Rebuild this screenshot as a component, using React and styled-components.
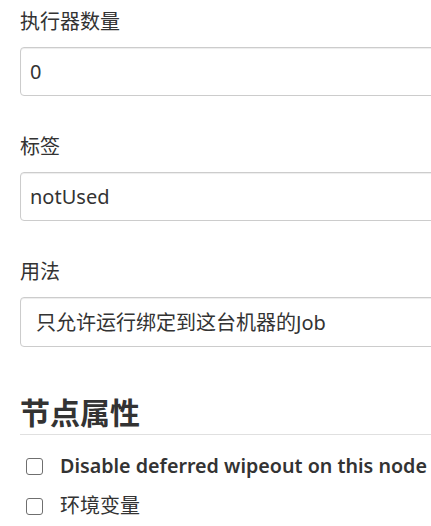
import styled, { createGlobalStyle } from 'styled-components';

const GlobalStyle = createGlobalStyle`
  html, body {
    margin: 0;
    padding: 0;
    background: #fff;
    overflow: hidden;
  }
  body {
    font-family: "Noto Sans", "Noto Sans CJK SC", sans-serif;
    color: #333;
  }
`;

const Page = styled.div`
  width: 480px;
  padding: 7px 0 0 20px;
`;

const FormGroup = styled.div`
  margin-bottom: 36px;
`;

const Label = styled.label`
  display: block;
  font-size: 20px;
  line-height: 30px;
  margin-bottom: 10px;
`;

const Input = styled.input`
  display: block;
  box-sizing: border-box;
  width: 100%;
  height: 49px;
  padding: 0 9px;
  font-family: inherit;
  font-size: 20px;
  color: #333;
  background: #fff;
  border: 1px solid #ccc;
  border-radius: 4px;
  box-shadow: inset 0 1px 1px rgba(0, 0, 0, 0.075);
  outline: none;
`;

const Select = styled.select`
  display: block;
  box-sizing: border-box;
  width: 100%;
  height: 50px;
  padding: 0 15px;
  font-family: inherit;
  font-size: 20px;
  color: #333;
  background: #fff;
  border: 1px solid #ccc;
  border-radius: 4px;
  box-shadow: inset 0 1px 1px rgba(0, 0, 0, 0.075);
  appearance: none;
  outline: none;
`;

const Heading = styled.h2`
  margin: 48px 0 0;
  padding-bottom: 3px;
  font-size: 30px;
  line-height: 36px;
  font-weight: 700;
  color: #333;
  border-bottom: 1px solid #e0e0e0;
`;

const CheckList = styled.div`
  display: flex;
  flex-direction: column;
  gap: 10px;
  padding-top: 16px;
`;

const CheckRow = styled.label`
  display: flex;
  align-items: center;
  font-size: ${(p) => (p.$strong ? '19.7px' : '20px')};
  line-height: 30px;
  font-weight: ${(p) => (p.$strong ? 600 : 400)};
  color: #333;
  white-space: nowrap;
`;

const Box = styled.input`
  appearance: none;
  box-sizing: border-box;
  width: 17px;
  height: 17px;
  margin: 0 17px 0 6px;
  border: 1.5px solid #6f6f6f;
  border-radius: 3px;
  background: #fff;
  flex-shrink: 0;
`;

const App = () => {
  return (
    <Page>
      <GlobalStyle />
      <FormGroup>
        <Label>执行器数量</Label>
        <Input defaultValue="0" />
      </FormGroup>
      <FormGroup>
        <Label>标签</Label>
        <Input defaultValue="notUsed" />
      </FormGroup>
      <FormGroup>
        <Label>用法</Label>
        <Select defaultValue="exclusive">
          <option value="exclusive">只允许运行绑定到这台机器的Job</option>
        </Select>
      </FormGroup>
      <Heading>节点属性</Heading>
      <CheckList>
        <CheckRow $strong>
          <Box type="checkbox" />
          Disable deferred wipeout on this node
        </CheckRow>
        <CheckRow>
          <Box type="checkbox" />
          环境变量
        </CheckRow>
      </CheckList>
    </Page>
  );
};

export default App;
